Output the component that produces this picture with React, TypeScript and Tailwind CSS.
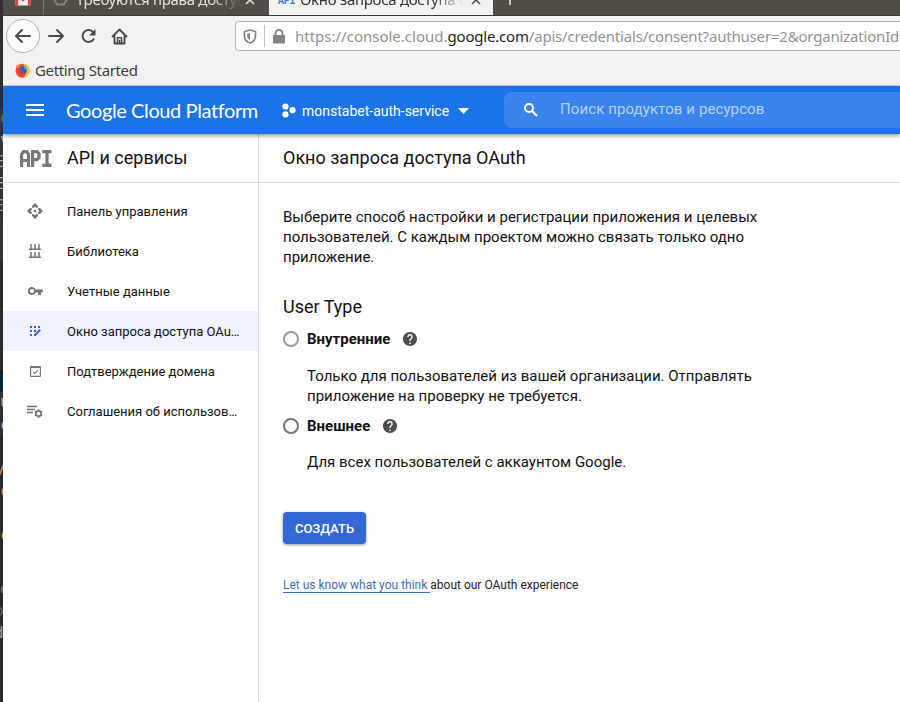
import React from "react";

const ubuntu = "font-['Noto_Sans','Open_Sans',sans-serif]";

type StripRow = { text?: string; cls: string };

const stripRows: StripRow[] = [
  { cls: "h-[108px] bg-[#303030]" },
  { text: "o", cls: "h-[22px] bg-[#3a3a3a] text-[#777]" },
  { text: "v", cls: "h-[22px] bg-[#353535] text-[#aaa]" },
  { text: "E", cls: "h-[22px] bg-[#353535] text-[#999] indent-[-4px]" },
  { text: "E", cls: "h-[22px] bg-[#333] text-[#aaa] indent-[-4px]" },
  { text: "E", cls: "h-[22px] bg-[#303030] text-[#999] indent-[-4px]" },
  { cls: "h-[43px] bg-[#353535]" },
  { cls: "h-[109px] bg-[#2b2b2b]" },
  { cls: "h-[22px] bg-[#052538]" },
  { text: "u", cls: "h-[23px] bg-[#313133] text-[#c8a58c]" },
  { text: "c", cls: "h-[22px] bg-[#2f2f31] text-[#aaa]" },
  { cls: "h-[22px] bg-[#29292b]" },
  { text: "y", cls: "h-[22px] bg-[#29292b] text-[#d08a60] indent-[-5px]" },
  { text: "c", cls: "h-[22px] bg-[#29292b] text-[#e88a52]" },
  { cls: "h-[22px] bg-[#29292b]" },
  { text: "c", cls: "h-[22px] bg-[#29292b] text-[#e88a52]" },
  { cls: "h-[32px] bg-[#29292b]" },
  { text: "e", cls: "h-[22px] bg-[#29292b] text-[#777]" },
  { text: "o", cls: "h-[22px] bg-[#29292b] text-[#666] indent-[-6px]" },
  { text: "d", cls: "h-[22px] bg-[#29292b] text-[#999] indent-[-6px]" },
  { cls: "h-[60px] bg-[#29292b]" },
];

function EditorStrip() {
  return (
    <div className="flex w-[3px] shrink-0 flex-col overflow-hidden bg-[#29292b] font-['DejaVu_Sans_Mono',monospace] text-[16px] leading-[20px]">
      {stripRows.map((r, i) => (
        <div key={i} className={"shrink-0 overflow-hidden " + r.cls}>
          {r.text}
        </div>
      ))}
    </div>
  );
}

function CloseX({ className }: { className: string }) {
  return (
    <svg className={className} viewBox="0 0 10 10" width="10" height="10" fill="none" stroke="currentColor" strokeWidth="1.7">
      <path d="M1 1l8 8M9 1l-8 8" />
    </svg>
  );
}

function TabBar() {
  return (
    <div className={"flex h-4 items-end overflow-hidden border-b border-[#3b3934] bg-[#514e47] text-[15px] " + ubuntu}>
      <div className="flex h-8 w-[40px] shrink-0 items-center pl-3">
        <svg width="16" height="13" viewBox="0 0 16 13">
          <rect x="0.5" y="0.5" width="15" height="12" rx="1" fill="#f4eeee" />
          <path d="M0.5 1v11.5h2.6V4.6L8 8.4l4.900-3.800v7.900h2.600V1L8 6.500z" fill="#d94338" />
        </svg>
      </div>
      <div className="flex h-8 w-[226px] shrink-0 items-center border-l border-[#77746c] pl-[9px] text-[#e4e2dc]">
        <svg width="15" height="14" viewBox="0 0 15 14" fill="none" stroke="#85827a" strokeWidth="2">
          <path d="M4 1h7l3 6-3 5.500H4L1 7z" />
        </svg>
        <div className="ml-[8px] w-[166px] overflow-hidden whitespace-nowrap tracking-[-0.3px] [mask-image:linear-gradient(to_right,black_82%,transparent_99%)]">
          Требуются права доступа
        </div>
        <CloseX className="mt-px ml-[3px] text-[#dedbd4]" />
      </div>
      <div className="-mb-px flex h-[33px] w-[224px] shrink-0 items-center bg-[#f3f2f1] pl-[9px] text-[#33363a]">
        <span className="mt-[3px] w-[17px] font-['Liberation_Mono',monospace] text-[10px] font-bold tracking-[-0.3px] text-[#4b76c9]">API</span>
        <div className="ml-[5px] w-[166px] overflow-hidden whitespace-nowrap tracking-[-0.3px] [mask-image:linear-gradient(to_right,black_80%,transparent_99%)]">
          Окно запроса доступа OAuth
        </div>
        <CloseX className="mt-px ml-[5px] text-[#55585a]" />
      </div>
      <div className="flex h-8 items-center pl-[10px] text-[#dedbd4]">
        <svg width="14" height="14" viewBox="0 0 14 14" stroke="currentColor" strokeWidth="1.700">
          <path d="M7 1v12M1 7h12" />
        </svg>
      </div>
    </div>
  );
}

function NavBar() {
  return (
    <div className="flex h-[40px] shrink-0 items-center bg-[#f3f2f1] text-[#4b4b4b]">
      <div className="ml-[3px] flex size-[34px] items-center justify-center rounded-full border border-[#b5b4b2] bg-[#fcfcfc]">
        <svg width="18" height="16" viewBox="0 0 18 16" fill="none" stroke="currentColor" strokeWidth="2" strokeLinecap="round" strokeLinejoin="round">
          <path d="M16 8H2M8 2L2 8l6 6" />
        </svg>
      </div>
      <svg className="ml-[7px]" width="18" height="16" viewBox="0 0 18 16" fill="none" stroke="currentColor" strokeWidth="2" strokeLinecap="round" strokeLinejoin="round">
        <path d="M2 8h14M10 2l6 6-6 6" />
      </svg>
      <svg className="ml-[15px]" width="17" height="16" viewBox="0 0 17 16" fill="none" stroke="currentColor" strokeWidth="2">
        <path d="M13.600 11.200A6 6 0 1 1 13.500 4.500" strokeLinecap="round" />
        <path d="M15.500 1v6.500H9z" fill="currentColor" stroke="none" />
      </svg>
      <svg className="ml-[14px]" width="17" height="17" viewBox="0 0 17 17" fill="none" stroke="currentColor" strokeWidth="1.900" strokeLinecap="round" strokeLinejoin="round">
        <path d="M1.500 8.500l7-7 7 7M3.500 7.500v8h10v-8" />
        <path d="M6.500 15.500V9.800h4v5.700M8.500 12.500v3" strokeWidth="1.500" />
      </svg>
      <div className="ml-[107px] flex h-[30px] flex-1 items-center overflow-hidden rounded-l-[4px] border border-r-0 border-[#bcbbb9] bg-white text-[#858585]">
        <svg className="ml-[7px] shrink-0" width="14" height="15" viewBox="0 0 14 15" fill="none" stroke="currentColor" strokeWidth="1.700" strokeLinejoin="round">
          <path d="M7 1l5.500 1.500v4.500c0 3.500-2.500 6-5.500 7-3-1-5.500-3.500-5.500-7V2.500z" />
          <path d="M7 4v7C5 10 4.200 8.500 4.200 7V4.700z" fill="currentColor" stroke="none" />
        </svg>
        <div className="ml-[7px] h-[22px] w-px shrink-0 bg-[#c4c4c4]" />
        <svg className="ml-[7px] shrink-0" width="14" height="15" viewBox="0 0 14 15">
          <path d="M3.500 7V4.500a3.500 3.500 0 0 1 7 0V7" fill="none" stroke="currentColor" strokeWidth="2" />
          <rect x="1" y="6" width="12" height="8.500" rx="1" fill="currentColor" />
        </svg>
        <div className={"ml-[9px] whitespace-nowrap text-[15px] leading-[20px] text-[#929292] " + ubuntu}>
          <span className="tracking-[0px]">https://console.cloud.</span>
          <span className="tracking-[-0.2px] text-[#242424]">google.com</span>
          <span className="tracking-[-0.19px]">/apis/credentials/consent?authuser=2&amp;organizationId=0</span>
        </div>
      </div>
    </div>
  );
}

function BookmarkBar() {
  return (
    <div className={"flex h-[30px] shrink-0 items-center border-b border-[#c3cbd8] bg-[#f3f2f1] pl-[12px] text-[15px] text-[#3d3d3d] " + ubuntu}>
      <svg width="15" height="15" viewBox="0 0 16 16">
        <circle cx="8" cy="8.300" r="7.500" fill="#f4492f" />
        <path d="M9 .5c5 1 7 5 6.500 8.500C15 13 12 15.500 8.500 15.700 12 13 13 9 11 5z" fill="#ffc02e" />
        <path d="M1 5C1 3 2 2 3 1.200l1 2.600 3 1.200z" fill="#ff8a27" />
        <circle cx="8.500" cy="7.500" r="4.100" fill="#2867b8" />
        <path d="M9 2.500a4.500 4.500 0 0 1 3.500 5L10 6z" fill="#39b5e7" />
        <path d="M2.500 5.500c2 0 4 .5 5.500 2L6 9.500c1 1.500 3 1.500 4.500.6C9 14 2.500 12 2.500 5.500z" fill="#f02e50" />
      </svg>
      <span className="ml-[5px] tracking-[-0.35px]">Getting Started</span>
    </div>
  );
}

function CloudHeader() {
  return (
    <header className="relative z-10 flex h-[48px] shrink-0 items-center bg-[#1a73e8] text-white shadow-[0_2px_4px_rgba(0,0,0,0.4)]">
      <svg className="ml-[23px] shrink-0" width="18" height="12" viewBox="0 0 18 12" fill="currentColor">
        <path d="M0 0h18v2H0zM0 5h18v2H0zM0 10h18v2H0z" />
      </svg>
      <div className="ml-[21px] w-[217px] shrink-0 whitespace-nowrap pl-px font-['Lato',sans-serif] text-[20px] leading-[24px] tracking-[-0.4px]">
        Google Cloud Platform
      </div>
      <svg className="shrink-0" width="14" height="15" viewBox="0 0 14 15" fill="currentColor">
        <circle cx="3.500" cy="3.500" r="3.100" />
        <circle cx="10.500" cy="7.200" r="3.100" />
        <circle cx="3.500" cy="11.400" r="3.100" />
      </svg>
      <div className="ml-[6px] w-[156px] shrink-0 whitespace-nowrap pt-[2px] font-['Roboto',sans-serif] text-[14px]">monstabet-auth-service</div>
      <svg className="mt-px shrink-0" width="11" height="6" viewBox="0 0 11 6" fill="currentColor">
        <path d="M0 0h11L5.500 6z" />
      </svg>
      <div className="ml-[35px] flex h-9 flex-1 items-center rounded-l-lg bg-[#3b83ed]">
        <svg className="ml-[20px] shrink-0" width="14" height="14" viewBox="0 0 14 14" fill="none" stroke="currentColor" strokeWidth="2">
          <circle cx="5" cy="5" r="4" />
          <path d="M8 8l5 5" strokeWidth="2.200" />
        </svg>
        <span className="mb-[2px] ml-[22px] whitespace-nowrap font-['Roboto',sans-serif] text-[15px] tracking-[0.1px] text-[#b5d3fa]">Поиск продуктов и ресурсов</span>
      </div>
    </header>
  );
}

const icons: Record<string, React.ReactNode> = {
  dashboard: (
    <svg width="16" height="16" viewBox="0 0 16 16" fill="currentColor">
      <path d="M8 0l3 3v1.200L9.700 5.300 8 3.600 6.300 5.300 5 4.200V3zM8 16l3-3v-1.200l-1.300-1.100L8 12.400l-1.700-1.700L5 11.800V13zM0 8l3-3h1.200l1.100 1.300L3.600 8l1.700 1.700L4.200 11H3zM16 8l-3-3h-1.200l-1.100 1.300L12.400 8l-1.700 1.700 1.100 1.300H13z" />
      <circle cx="8" cy="8" r="1.300" />
    </svg>
  ),
  library: (
    <svg width="12" height="14" viewBox="0 0 12 14" fill="none" stroke="currentColor" strokeWidth="1.500">
      <path d="M0 5.300h12M2 0v5.500M6 0v5.500M10 0v5.500M0 13.200h12M2 8V13M6 8V13M10 8V13" />
    </svg>
  ),
  key: (
    <svg width="15" height="8" viewBox="0 0 15 8" fill="currentColor">
      <path fillRule="evenodd" d="M7.600 2.600A4 4 0 1 0 7.600 5.400H10V8h3V5.400h1.700V2.600zM4 6.100a2.100 2.100 0 1 1 0-4.200 2.100 2.100 0 0 1 0 4.200z" />
    </svg>
  ),
  consent: (
    <svg width="12" height="12" viewBox="0 0 12 12" fill="currentColor">
      <path d="M1 1h2v2H1zM5 1h2v2H5zM9 1h2v2H9zM1 5h2v2H1zM5 5h2v2H5zM1 9h2v2H1zM5 9.500l5.500-5.500 1.500 1.500L6.500 11H5z" />
    </svg>
  ),
  domain: (
    <svg width="11" height="11" viewBox="0 0 11 11" fill="none" stroke="currentColor">
      <rect x="0.600" y="0.600" width="9.800" height="9.800" rx="0.500" strokeWidth="1.100" />
      <path d="M0 1.200h11" strokeWidth="1.600" />
      <path d="M3.300 5.900l1.500 1.500 3.200-3.200" strokeWidth="1.100" />
    </svg>
  ),
  terms: (
    <svg width="16" height="13" viewBox="0 0 16 13" fill="none" stroke="currentColor">
      <path d="M0 1.500h10M0 4.500h8M0 7.500h6" strokeWidth="1.600" />
      <circle cx="11.500" cy="8.500" r="2.700" strokeWidth="1.700" />
      <path d="M11.500 4.300v1.500M11.500 11.200v1.500M7.900 6.400l1.300.8M13.800 9.800l1.300.8M7.900 10.600l1.300-.8M13.800 7.200l1.300-.8" strokeWidth="1.700" />
    </svg>
  ),
};

const menu = [
  { icon: "dashboard", label: "Панель управления" },
  { icon: "library", label: "Библиотека" },
  { icon: "key", label: "Учетные данные" },
  { icon: "consent", label: "Окно запроса доступа OAu…", active: true },
  { icon: "domain", label: "Подтверждение домена" },
  { icon: "terms", label: "Соглашения об использов…" },
];

function ApiLogo() {
  return (
    <svg className="shrink-0" width="32" height="17" viewBox="0 0 32 17" fill="none" stroke="#777" strokeWidth="3.200">
      <path d="M1.600 17V4.200l2-2.600h3L8.500 4.200V17M1.500 10.500h7" />
      <path d="M12.600 17V1.600h4.400l2 2v4l-2 2h-4.400" />
      <path d="M22.300 1.600H31.500M22.300 15.400H31.500M27 1.500v14" />
    </svg>
  );
}

function Sidebar() {
  return (
    <aside className="flex w-[256px] shrink-0 flex-col border-r border-[#dcdcdc]">
      <div className="flex h-[49px] items-center border-b border-[#dcdcdc] pl-[17px]">
        <ApiLogo />
        <h2 className="mb-[2px] ml-[15px] text-[18px] text-[#111]">API и сервисы</h2>
      </div>
      <nav className="flex flex-col pt-[8px]">
        {menu.map((m) => (
          <div key={m.label} className={"flex h-10 items-center " + (m.active ? "bg-[#eef3fe] text-[#3367d6]" : "text-[#757575]")}>
            <div className="flex w-16 shrink-0 justify-center">{icons[m.icon]}</div>
            <span className="pt-[2px] whitespace-nowrap text-[13px] text-[#111]">{m.label}</span>
          </div>
        ))}
      </nav>
    </aside>
  );
}

function Help() {
  return (
    <svg width="14" height="14" viewBox="2 2 20 20" fill="#4d4d4d">
      <path d="M12 2C6.480 2 2 6.480 2 12s4.480 10 10 10 10-4.480 10-10S17.520 2 12 2zm1 17h-2v-2h2v2zm2.070-7.750l-.9.920C13.450 12.900 13 13.500 13 15h-2v-.5c0-1.100.45-2.100 1.170-2.830l1.240-1.260c.37-.36.59-.86.59-1.410 0-1.100-.9-2-2-2s-2 .9-2 2H8c0-2.210 1.790-4 4-4s4 1.790 4 4c0 .88-.36 1.680-.93 2.250z" />
    </svg>
  );
}

function RadioRow({ label, ring }: { label: string; ring: string }) {
  return (
    <div className="flex h-5 items-center">
      <div className={"size-4 shrink-0 rounded-full border-2 " + ring} />
      <span className="mr-[13px] ml-2 text-[15px] font-bold">{label}</span>
      <Help />
    </div>
  );
}

function Main() {
  return (
    <main className="flex flex-1 flex-col text-[#111]">
      <div className="flex h-[49px] shrink-0 items-center border-b border-[#dcdcdc] pl-6">
        <h1 className="mb-[2px] text-[18px]">Окно запроса доступа OAuth</h1>
      </div>
      <div className="flex flex-col items-start pt-6 pl-6 text-[15px] leading-[20px]">
        <p className="whitespace-nowrap">
          Выберите способ настройки и регистрации приложения и целевых
          <br />
          пользователей. С каждым проектом можно связать только одно
          <br />
          приложение.
        </p>
        <h3 className="mt-[28px] text-[18px] leading-[24px]">User Type</h3>
        <div className="mt-[10px]">
          <RadioRow label="Внутренние" ring="border-[#999]" />
        </div>
        <p className="mt-[17px] ml-6 whitespace-nowrap">
          Только для пользователей из вашей организации. Отправлять
          <br />
          приложение на проверку не требуется.
        </p>
        <div className="mt-[10px]">
          <RadioRow label="Внешнее" ring="border-[#757575]" />
        </div>
        <p className="mt-[16px] ml-6 whitespace-nowrap">Для всех пользователей с аккаунтом Google.</p>
        <button className="mt-[40px] h-8 w-[83px] rounded-[4px] bg-[#3367d6] pt-px text-[13px] font-medium text-white shadow-[0_1px_3px_rgba(0,0,0,0.4)]">
          СОЗДАТЬ
        </button>
        <div className="mt-[34px] flex text-[12px] leading-[14px] whitespace-pre text-[#222]">
          <span className="border-b border-[#3b6fb5] text-[#3b6fb5]">Let us know what you think </span>
          <span>about our OAuth experience</span>
        </div>
      </div>
    </main>
  );
}

export default function App() {
  return (
    <div className="flex h-[702px] w-[900px] overflow-hidden bg-white">
      <EditorStrip />
      <div className="flex min-w-0 flex-1 flex-col">
        <TabBar />
        <NavBar />
        <BookmarkBar />
        <CloudHeader />
        <div className="flex flex-1 bg-white font-['Roboto',sans-serif]">
          <Sidebar />
          <Main />
        </div>
      </div>
    </div>
  );
}
